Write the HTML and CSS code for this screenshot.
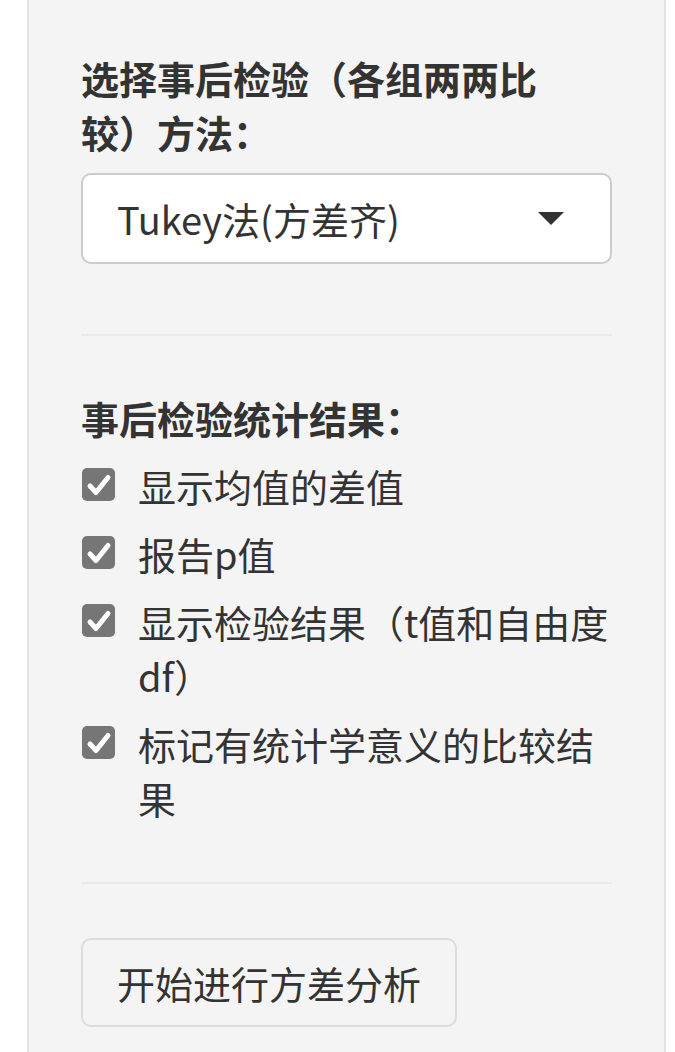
FILE: index.html
```html
<!DOCTYPE html>
<html>
<head>
    <title>方差分析 - 事后检验</title>
    <link rel="stylesheet" href="styles.css">
</head>
<body>
    <div class="sidebar">
        <div class="well">
            <div class="form-group">
                <label class="control-label label-narrow">选择事后检验（各组两两比较）方法：</label>
                <div class="select-box">
                    <span class="select-value">Tukey法(方差齐)</span>
                    <span class="caret"></span>
                </div>
            </div>

            <hr class="divider">

            <div class="form-group">
                <label class="control-label">事后检验统计结果：</label>
                <div class="options-group">
                    <label class="checkbox">
                        <span class="check-box">
                            <svg viewBox="0 0 32 32" width="32" height="32"><path d="M7 17 L13 23.5 L25 8.5" fill="none" stroke="#fff" stroke-width="5" stroke-linecap="round" stroke-linejoin="round"/></svg>
                        </span>
                        <span class="check-text">显示均值的差值</span>
                    </label>
                    <label class="checkbox">
                        <span class="check-box">
                            <svg viewBox="0 0 32 32" width="32" height="32"><path d="M7 17 L13 23.5 L25 8.5" fill="none" stroke="#fff" stroke-width="5" stroke-linecap="round" stroke-linejoin="round"/></svg>
                        </span>
                        <span class="check-text">报告p值</span>
                    </label>
                    <label class="checkbox">
                        <span class="check-box">
                            <svg viewBox="0 0 32 32" width="32" height="32"><path d="M7 17 L13 23.5 L25 8.5" fill="none" stroke="#fff" stroke-width="5" stroke-linecap="round" stroke-linejoin="round"/></svg>
                        </span>
                        <span class="check-text">显示检验结果（t值和自由度df）</span>
                    </label>
                    <label class="checkbox">
                        <span class="check-box">
                            <svg viewBox="0 0 32 32" width="32" height="32"><path d="M7 17 L13 23.5 L25 8.5" fill="none" stroke="#fff" stroke-width="5" stroke-linecap="round" stroke-linejoin="round"/></svg>
                        </span>
                        <span class="check-text">标记有统计学意义的比较结果</span>
                    </label>
                </div>
            </div>

            <hr class="divider divider-bottom">

            <button class="btn-run" type="button">开始进行方差分析</button>
        </div>
    </div>
</body>
</html>
```

FILE: styles.css
```css
html {
    overflow: hidden;
}
body {
    margin: 0;
    padding: 0;
    font-family: "Noto Sans CJK SC", "Noto Sans", sans-serif;
    font-size: 38px;
    line-height: 54px;
    color: #333;
    background-color: #ffffff;
}
.sidebar {
    padding-left: 27px;
    width: 639px;
}
.well {
    background-color: #f4f4f4;
    border: 2px solid #e3e3e3;
    border-top: none;
    padding: 51px 52px 60px 52px;
    min-height: 1100px;
}
.form-group {
    margin: 0;
}
.control-label {
    display: block;
    font-weight: 700;
    margin-bottom: 14px;
}
.label-narrow {
    max-width: 500px;
}
.select-box {
    height: 91px;
    box-sizing: border-box;
    border: 2px solid #cccccc;
    border-radius: 10px;
    background-color: #ffffff;
    display: flex;
    align-items: center;
    justify-content: space-between;
    padding: 0 46px 0 34px;
}
.caret {
    width: 0;
    height: 0;
    border-left: 13px solid transparent;
    border-right: 13px solid transparent;
    border-top: 13px solid #333;
}
.divider {
    border: 0;
    border-top: 2px solid #e9e9e9;
    margin: 70px 0 55px 0;
}
.divider-bottom {
    margin: 57px 0 54px 0;
}
.options-group {
    display: flex;
    flex-direction: column;
    gap: 14px;
    margin-top: 2px;
}
.checkbox {
    display: flex;
    align-items: flex-start;
}
.check-box {
    flex: none;
    width: 33px;
    height: 33px;
    margin: 9px 23px 0 1px;
    border-radius: 5px;
    background-color: #767676;
    display: flex;
    align-items: center;
    justify-content: center;
}
.check-text {
    flex: 1;
}
.btn-run {
    display: block;
    height: 89px;
    padding: 0 34px;
    font-family: inherit;
    font-size: 38px;
    color: #333;
    background-color: #f4f4f4;
    border: 2px solid #dcdcdc;
    border-radius: 10px;
}
```
